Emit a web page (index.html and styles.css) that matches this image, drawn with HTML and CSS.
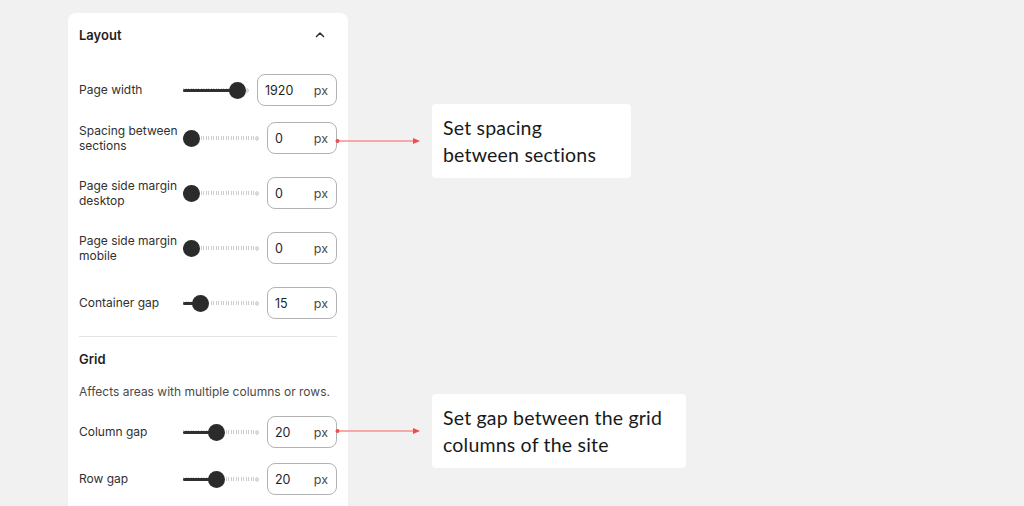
FILE: index.html
```html
<!DOCTYPE html>
<html>
<head>
<meta charset="utf-8">
<link rel="stylesheet" href="styles.css">
</head>
<body>
<div class="stage">
  <section class="panel">
    <header class="panel-head">
      <h2 class="panel-title">Layout</h2>
      <svg class="chev" width="16" height="16" viewBox="0 0 16 16"><polyline points="4.5,9.5 8,6 11.5,9.5" fill="none" stroke="#303030" stroke-width="1.5" stroke-linecap="round" stroke-linejoin="round"/></svg>
    </header>

    <div class="rows">
      <div class="row row-first">
        <div class="label">Page width</div>
        <div class="slider" style="--v:0.93"><div class="fill"></div><div class="thumb"></div></div>
        <div class="field field-wide"><span class="num">1920</span><span class="unit">px</span></div>
      </div>
      <div class="row">
        <div class="label">Spacing between sections</div>
        <div class="slider" style="--v:0"><div class="fill"></div><div class="thumb"></div></div>
        <div class="field"><span class="num">0</span><span class="unit">px</span></div>
      </div>
      <div class="row">
        <div class="label">Page side margin desktop</div>
        <div class="slider" style="--v:0"><div class="fill"></div><div class="thumb"></div></div>
        <div class="field"><span class="num">0</span><span class="unit">px</span></div>
      </div>
      <div class="row">
        <div class="label">Page side margin mobile</div>
        <div class="slider" style="--v:0"><div class="fill"></div><div class="thumb"></div></div>
        <div class="field"><span class="num">0</span><span class="unit">px</span></div>
      </div>
      <div class="row">
        <div class="label">Container gap</div>
        <div class="slider" style="--v:0.16"><div class="fill"></div><div class="thumb"></div></div>
        <div class="field"><span class="num">15</span><span class="unit">px</span></div>
      </div>
    </div>

    <hr class="divider">

    <h3 class="sub-title">Grid</h3>
    <p class="desc">Affects areas with multiple columns or rows.</p>

    <div class="rows rows-grid">
      <div class="row">
        <div class="label">Column gap</div>
        <div class="slider" style="--v:0.43"><div class="fill"></div><div class="thumb"></div></div>
        <div class="field"><span class="num">20</span><span class="unit">px</span></div>
      </div>
      <div class="row">
        <div class="label">Row gap</div>
        <div class="slider" style="--v:0.43"><div class="fill"></div><div class="thumb"></div></div>
        <div class="field"><span class="num">20</span><span class="unit">px</span></div>
      </div>
    </div>
  </section>

  <div class="note note-1">
    <svg class="arrow" width="88" height="8" viewBox="0 0 88 8"><line x1="2" y1="4" x2="82" y2="4" stroke="#f78f8f" stroke-width="1.5"/><circle cx="2.5" cy="4" r="2" fill="#f04c4c"/><polygon points="78,1 85,4 78,7" fill="#f04c4c"/></svg>
    <div class="callout callout-1">Set spacing between sections</div>
  </div>

  <div class="note note-2">
    <svg class="arrow" width="88" height="8" viewBox="0 0 88 8"><line x1="2" y1="4" x2="82" y2="4" stroke="#f78f8f" stroke-width="1.5"/><circle cx="2.5" cy="4" r="2" fill="#f04c4c"/><polygon points="78,1 85,4 78,7" fill="#f04c4c"/></svg>
    <div class="callout callout-2">Set gap between the grid columns of the site</div>
  </div>
</div>
</body>
</html>
```

FILE: styles.css
```css
html, body {
  margin: 0;
  padding: 0;
  height: 100%;
  overflow: hidden;
}
body {
  background: #f1f1f1;
  font-family: Inter, "Liberation Sans", sans-serif;
  color: #303030;
}
.stage {
  position: relative;
  width: 1024px;
  height: 506px;
  padding: 13px 0 0 68px;
  box-sizing: border-box;
}
.panel {
  width: 280px;
  height: 500px;
  background: #ffffff;
  border-radius: 8px;
  padding: 0 11px;
  box-sizing: border-box;
}
.panel-head {
  height: 44px;
  display: flex;
  align-items: center;
  justify-content: space-between;
}
.panel-title {
  margin: 0;
  font-size: 13px;
  font-weight: 600;
  color: #1f1f1f;
}
.chev {
  margin-right: 9px;
}
.rows {
  display: flex;
  flex-direction: column;
  gap: 15px;
  padding-top: 13px;
}
.row {
  display: flex;
  align-items: center;
  height: 40px;
}
.row-first {
  margin-bottom: -7px;
}
.label {
  width: 104px;
  flex: none;
  font-size: 12px;
  line-height: 15.5px;
  white-space: normal;
}
.slider {
  flex: 1;
  height: 17px;
  position: relative;
  margin-right: 8px;
  background:
    radial-gradient(circle at calc(100% - 2px) 50%, #d9d9d9 0 2px, transparent 2.5px),
    repeating-linear-gradient(90deg, #cdcdcd 0 1px, transparent 1px 2.5px) left center / calc(100% - 4px) 4px no-repeat;
}
.fill {
  position: absolute;
  left: 0;
  top: 7px;
  height: 3px;
  border-radius: 2px;
  background: #303030;
  width: calc((100% - 17px) * var(--v) + 8px);
}
.thumb {
  position: absolute;
  top: 0;
  width: 17px;
  height: 17px;
  border-radius: 50%;
  background: #2b2b2b;
  left: calc((100% - 17px) * var(--v));
}
.field {
  flex: none;
  width: 70px;
  height: 32px;
  border: 1px solid #b3b3b3;
  border-radius: 8px;
  box-sizing: border-box;
  display: flex;
  align-items: center;
  justify-content: space-between;
  padding: 0 8px 0 7px;
  font-size: 12.5px;
}
.field-wide {
  width: 80px;
}
.num {
  color: #1f1f1f;
}
.unit {
  color: #4a4a4a;
}
.divider {
  border: 0;
  border-top: 1px solid #e3e3e3;
  margin: 13px 0 0;
}
.sub-title {
  margin: 0;
  padding-top: 14px;
  font-size: 13px;
  line-height: 16px;
  font-weight: 600;
  color: #1f1f1f;
}
.desc {
  margin: 17px 0 0;
  font-size: 12px;
  line-height: 16px;
  color: #4a4a4a;
}
.rows-grid {
  padding-top: 12px;
  gap: 7px;
}

/* annotations (overlay) */
.note {
  position: absolute;
  left: 335px;
}
.note-1 { top: 104px; }
.note-2 { top: 394px; }
.arrow {
  position: absolute;
  left: 0;
  top: 33px;
}
.callout {
  position: absolute;
  left: 97px;
  top: 0;
  background: #ffffff;
  border-radius: 4px;
  padding: 10px 11px;
  box-sizing: border-box;
  height: 74px;
  font-family: Lato, "Open Sans", sans-serif;
  font-size: 19.5px;
  letter-spacing: 0.2px;
  line-height: 27px;
  color: #1a1a1a;
}
.callout-1 { width: 199px; padding-right: 30px; }
.callout-2 { width: 254px; padding-right: 8px; }
```
